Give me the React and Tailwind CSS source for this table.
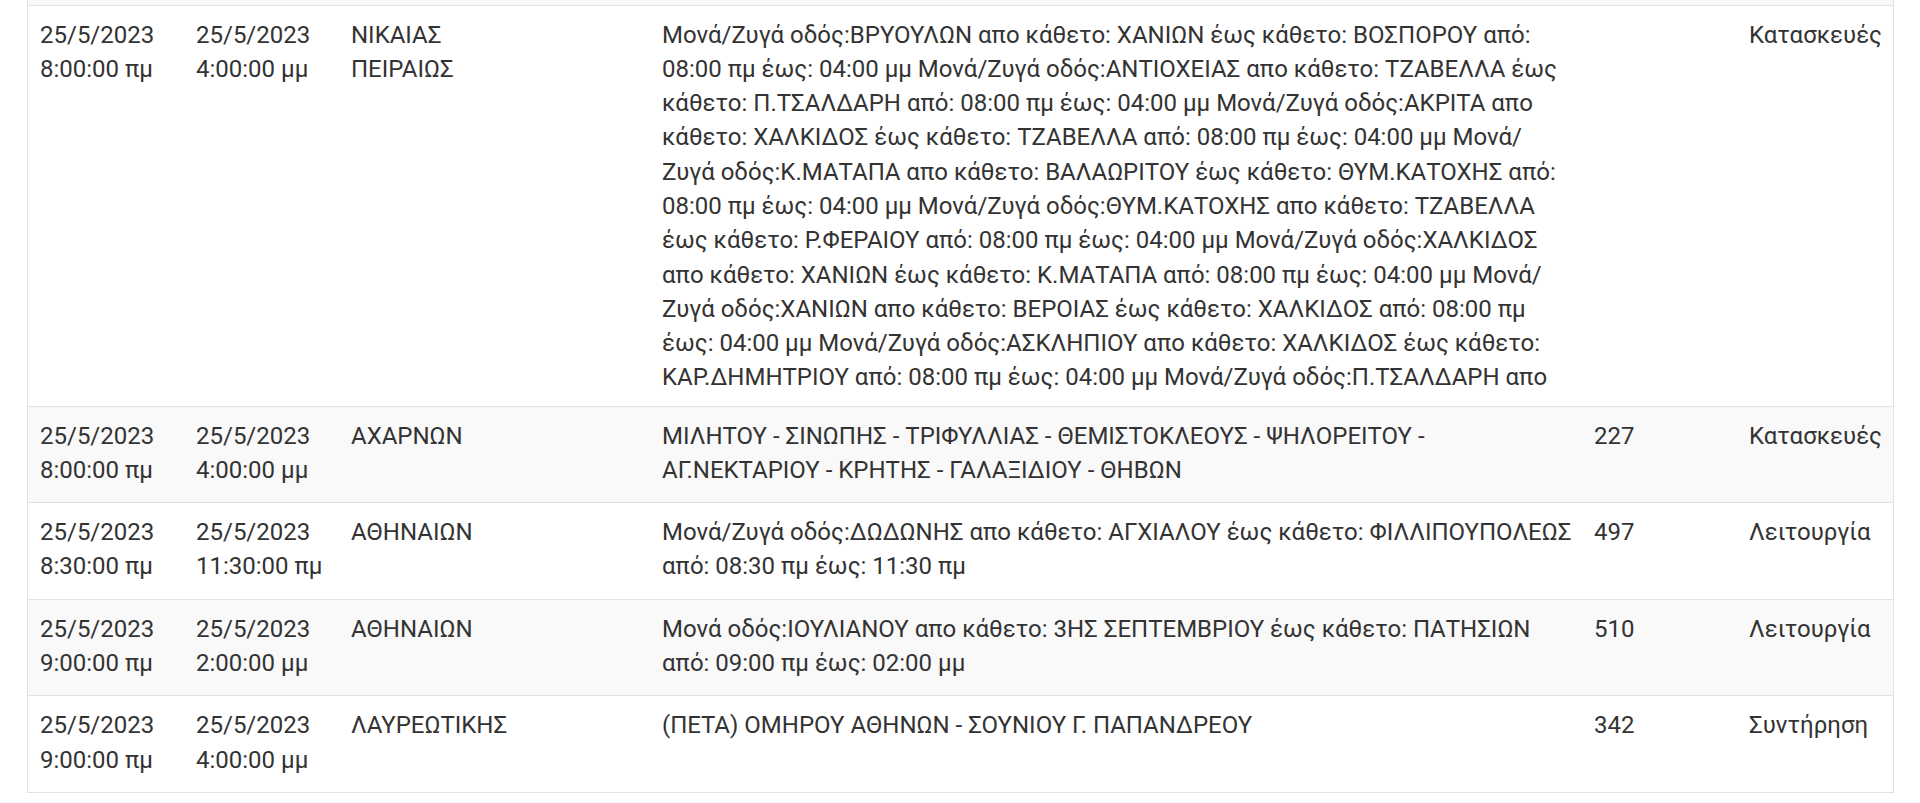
import React from "react";

const rows = [
  {
    from: ["25/5/2023", "8:00:00 πμ"],
    to: ["25/5/2023", "4:00:00 μμ"],
    area: ["ΝΙΚΑΙΑΣ", "ΠΕΙΡΑΙΩΣ"],
    desc:
      "Μονά/Ζυγά οδός:ΒΡΥΟΥΛΩΝ απο κάθετο: ΧΑΝΙΩΝ έως κάθετο: ΒΟΣΠΟΡΟΥ από: 08:00 πμ έως: 04:00 μμ Μονά/Ζυγά οδός:ΑΝΤΙΟΧΕΙΑΣ απο κάθετο: ΤΖΑΒΕΛΛΑ έως κάθετο: Π.ΤΣΑΛΔΑΡΗ από: 08:00 πμ έως: 04:00 μμ Μονά/Ζυγά οδός:ΑΚΡΙΤΑ απο κάθετο: ΧΑΛΚΙΔΟΣ έως κάθετο: ΤΖΑΒΕΛΛΑ από: 08:00 πμ έως: 04:00 μμ Μονά/Ζυγά οδός:Κ.ΜΑΤΑΠΑ απο κάθετο: ΒΑΛΑΩΡΙΤΟΥ έως κάθετο: ΘΥΜ.ΚΑΤΟΧΗΣ από: 08:00 πμ έως: 04:00 μμ Μονά/Ζυγά οδός:ΘΥΜ.ΚΑΤΟΧΗΣ απο κάθετο: ΤΖΑΒΕΛΛΑ έως κάθετο: Ρ.ΦΕΡΑΙΟΥ από: 08:00 πμ έως: 04:00 μμ Μονά/Ζυγά οδός:ΧΑΛΚΙΔΟΣ απο κάθετο: ΧΑΝΙΩΝ έως κάθετο: Κ.ΜΑΤΑΠΑ από: 08:00 πμ έως: 04:00 μμ Μονά/Ζυγά οδός:ΧΑΝΙΩΝ απο κάθετο: ΒΕΡΟΙΑΣ έως κάθετο: ΧΑΛΚΙΔΟΣ από: 08:00 πμ έως: 04:00 μμ Μονά/Ζυγά οδός:ΑΣΚΛΗΠΙΟΥ απο κάθετο: ΧΑΛΚΙΔΟΣ έως κάθετο: ΚΑΡ.ΔΗΜΗΤΡΙΟΥ από: 08:00 πμ έως: 04:00 μμ Μονά/Ζυγά οδός:Π.ΤΣΑΛΔΑΡΗ απο",
    num: "",
    type: "Κατασκευές",
    clip: true,
  },
  {
    from: ["25/5/2023", "8:00:00 πμ"],
    to: ["25/5/2023", "4:00:00 μμ"],
    area: ["ΑΧΑΡΝΩΝ"],
    desc:
      "ΜΙΛΗΤΟΥ - ΣΙΝΩΠΗΣ - ΤΡΙΦΥΛΛΙΑΣ - ΘΕΜΙΣΤΟΚΛΕΟΥΣ - ΨΗΛΟΡΕΙΤΟΥ - ΑΓ.ΝΕΚΤΑΡΙΟΥ - ΚΡΗΤΗΣ - ΓΑΛΑΞΙΔΙΟΥ - ΘΗΒΩΝ",
    num: "227",
    type: "Κατασκευές",
  },
  {
    from: ["25/5/2023", "8:30:00 πμ"],
    to: ["25/5/2023", "11:30:00 πμ"],
    area: ["ΑΘΗΝΑΙΩΝ"],
    desc:
      "Μονά/Ζυγά οδός:ΔΩΔΩΝΗΣ απο κάθετο: ΑΓΧΙΑΛΟΥ έως κάθετο: ΦΙΛΛΙΠΟΥΠΟΛΕΩΣ από: 08:30 πμ έως: 11:30 πμ",
    num: "497",
    type: "Λειτουργία",
  },
  {
    from: ["25/5/2023", "9:00:00 πμ"],
    to: ["25/5/2023", "2:00:00 μμ"],
    area: ["ΑΘΗΝΑΙΩΝ"],
    desc:
      "Μονά οδός:ΙΟΥΛΙΑΝΟΥ απο κάθετο: 3ΗΣ ΣΕΠΤΕΜΒΡΙΟΥ έως κάθετο: ΠΑΤΗΣΙΩΝ από: 09:00 πμ έως: 02:00 μμ",
    num: "510",
    type: "Λειτουργία",
  },
  {
    from: ["25/5/2023", "9:00:00 πμ"],
    to: ["25/5/2023", "4:00:00 μμ"],
    area: ["ΛΑΥΡΕΩΤΙΚΗΣ"],
    desc: "(ΠΕΤΑ) ΟΜΗΡΟΥ ΑΘΗΝΩΝ - ΣΟΥΝΙΟΥ Γ. ΠΑΠΑΝΔΡΕΟΥ",
    num: "342",
    type: "Συντήρηση",
  },
];

export default function App() {
  return (
    <div
      className="w-[1920px] h-[803px] bg-white overflow-hidden text-[#333333]"
      style={{ fontFamily: "Roboto, 'Noto Sans', sans-serif" }}
    >
      <div className="ml-[27px] w-[1867px] border-x border-b border-[#e2e2e2]">
        <table className="w-full table-fixed border-collapse text-[24px] leading-[34.3px]">
          <colgroup>
            <col className="w-[156px]" />
            <col className="w-[155px]" />
            <col className="w-[311px]" />
            <col className="w-[932px]" />
            <col className="w-[155px]" />
            <col />
          </colgroup>
          <tbody>
            <tr className="bg-[#f9f9f9] h-[5px]">
              <td colSpan={6} className="p-0 h-[5px]"></td>
            </tr>
            {rows.map((r, i) => {
              const bg = i % 2 === 1 ? "bg-[#f9f9f9]" : "bg-white";
              const pb = r.clip ? "pb-[11px]" : "pb-[15px]";
              const cell = `align-top pl-3 pt-3 ${pb} border-t border-[#e2e2e2]`;
              return (
                <tr key={i} className={bg}>
                  <td className={cell + " pr-3"}>
                    {r.from[0]}
                    <br />
                    {r.from[1]}
                  </td>
                  <td className={cell + " pr-3"}>
                    {r.to[0]}
                    <br />
                    {r.to[1]}
                  </td>
                  <td className={cell + " pr-3"}>
                    {r.area.map((a, j) => (
                      <div key={j}>{a}</div>
                    ))}
                  </td>
                  <td className={cell + " pr-[8px]"}>
                    {r.clip ? (
                      <div className="max-h-[377px] overflow-hidden">{r.desc}</div>
                    ) : (
                      r.desc
                    )}
                  </td>
                  <td className={cell + " pr-3"}>{r.num}</td>
                  <td className={cell + " pr-3 whitespace-nowrap"}>{r.type}</td>
                </tr>
              );
            })}
          </tbody>
        </table>
      </div>
    </div>
  );
}
